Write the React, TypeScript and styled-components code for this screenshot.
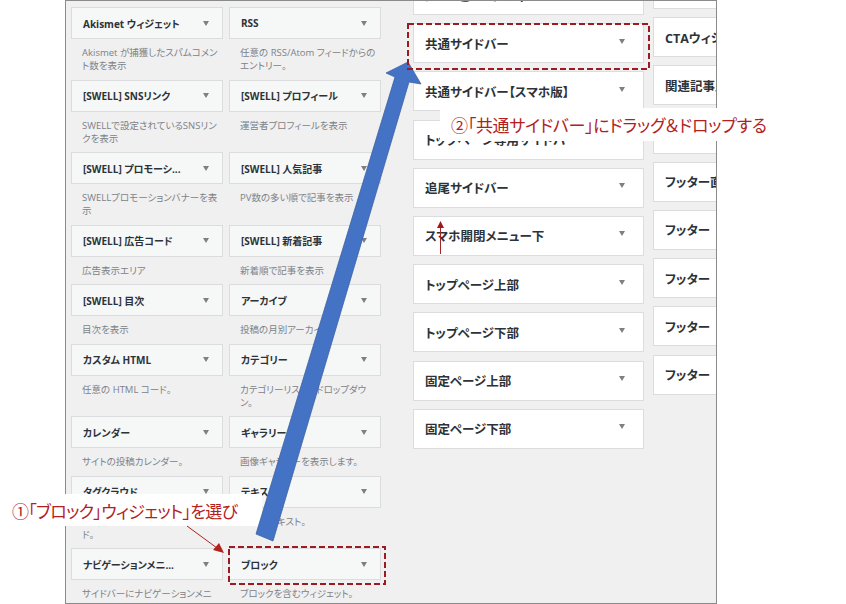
import styled, { createGlobalStyle } from 'styled-components';

const GlobalStyle = createGlobalStyle`
	html, body {
		margin: 0;
		padding: 0;
		background: #fff;
	}
	body {
		font-family: 'Open Sans', 'Noto Sans CJK JP', sans-serif;
		font-feature-settings: 'palt';
	}
`;

const Page = styled.div`
	position: relative;
	width: 846px;
	height: 604px;
	overflow: hidden;
	background: #fff;
`;

const Frame = styled.div`
	box-sizing: border-box;
	display: flex;
	align-items: flex-start;
	margin-left: 65px;
	width: 652px;
	height: 604px;
	padding-left: 5px;
	border: 1px solid #8b8b8b;
	background: #f0f0f1;
	overflow: hidden;
`;

const WidgetGrid = styled.div`
	display: grid;
	grid-template-columns: 152px 152px;
	column-gap: 6px;
	flex: none;
	margin-top: 6px;
	margin-right: 32px;
`;

const WidgetItem = styled.div`
	min-width: 0;
`;

const WidgetCard = styled.div`
	box-sizing: border-box;
	display: flex;
	align-items: center;
	justify-content: space-between;
	height: 32px;
	padding: 0 13px 0 11px;
	background: #f6f7f7;
	border: 1px solid #dcdcde;
	font-size: 10px;
	font-weight: 700;
	color: #2c3338;
	white-space: nowrap;
`;

const WidgetDesc = styled.div`
	padding: 7px 0 7.5px 11px;
	font-size: 9.5px;
	line-height: 13px;
	color: #7d8287;
	white-space: pre;
`;

const SidebarColumn = styled.div<{ $top: number }>`
	display: flex;
	flex: none;
	flex-direction: column;
	gap: 8.2px;
	width: 231px;
	margin-top: ${(p) => p.$top}px;
	margin-right: 9px;
`;

const SidebarCard = styled.div`
	box-sizing: border-box;
	display: flex;
	align-items: center;
	justify-content: space-between;
	height: 40px;
	padding: 0 18px 0 11px;
	background: #fff;
	border: 1px solid #dcdcde;
	font-size: 12.5px;
	font-weight: 700;
	color: #2c3338;
	white-space: nowrap;
`;

const Caret = styled.span<{ $lift: number }>`
	flex: none;
	width: 0;
	height: 0;
	margin-top: ${(p) => -p.$lift}px;
	border-left: 3px solid transparent;
	border-right: 3px solid transparent;
	border-top: 5px solid #7c7f83;
`;

const Callout = styled.div<{ $left: number; $top: number; $width: number; $height: number; $size: number }>`
	position: absolute;
	box-sizing: border-box;
	left: ${(p) => p.$left}px;
	top: ${(p) => p.$top}px;
	width: ${(p) => p.$width}px;
	height: ${(p) => p.$height}px;
	display: flex;
	align-items: center;
	background: #fff;
	font-size: ${(p) => p.$size}px;
	color: #b3211e;
	white-space: nowrap;
`;

const CalloutText = styled.span<{ $indent: number; $spacing: number }>`
	margin-left: ${(p) => p.$indent}px;
	letter-spacing: ${(p) => p.$spacing}px;
`;

const ArrowLayer = styled.svg`
	position: absolute;
	left: 0;
	top: 0;
`;

const widgets = [
	['Akismet ウィジェット', 'Akismet が捕獲したスパムコメン\nト数を表示'],
	['RSS', '任意の RSS/Atom フィードからの\nエントリー。'],
	['[SWELL] SNSリンク', 'SWELLで設定されているSNSリン\nクを表示'],
	['[SWELL] プロフィール', '運営者プロフィールを表示'],
	['[SWELL] プロモーシ...', 'SWELLプロモーションバナーを表\n示'],
	['[SWELL] 人気記事', 'PV数の多い順で記事を表示'],
	['[SWELL] 広告コード', '広告表示エリア'],
	['[SWELL] 新着記事', '新着順で記事を表示'],
	['[SWELL] 目次', '目次を表示'],
	['アーカイブ', '投稿の月別アーカイブ。'],
	['カスタム HTML', '任意の HTML コード。'],
	['カテゴリー', 'カテゴリーリストやドロップダウ\nン。'],
	['カレンダー', 'サイトの投稿カレンダー。'],
	['ギャラリー', '画像ギャラリーを表示します。'],
	['タグクラウド', 'よく使われているタグのクラウ\nド。'],
	['テキスト', '任意のテキスト。'],
	['ナビゲーションメニ...', 'サイドバーにナビゲーションメニ\nュー'],
	['ブロック', 'ブロックを含むウィジェット。'],
];

const middleSidebars = [
	'メインビジュアル下',
	'共通サイドバー',
	'共通サイドバー【スマホ版】',
	'トップページ専用サイドバー',
	'追尾サイドバー',
	'スマホ開閉メニュー下',
	'トップページ上部',
	'トップページ下部',
	'固定ページ上部',
	'固定ページ下部',
];

const rightSidebars = [
	'記事下エリア',
	'CTAウィジェット',
	'関連記事上',
	'関連記事下',
	'フッター直前',
	'フッター　1',
	'フッター　2',
	'フッター　3',
	'フッター　4',
];

export default function App() {
	return (
		<Page>
			<GlobalStyle />
			<Frame>
				<WidgetGrid>
					{widgets.map(([title, desc]) => (
						<WidgetItem key={title}>
							<WidgetCard>
								{title}
								<Caret $lift={0} />
							</WidgetCard>
							<WidgetDesc>{desc}</WidgetDesc>
						</WidgetItem>
					))}
				</WidgetGrid>

				<SidebarColumn $top={-26}>
					{middleSidebars.map((name) => (
						<SidebarCard key={name}>
							{name}
							<Caret $lift={4} />
						</SidebarCard>
					))}
				</SidebarColumn>

				<SidebarColumn $top={-32}>
					{rightSidebars.map((name) => (
						<SidebarCard key={name}>{name}</SidebarCard>
					))}
				</SidebarColumn>
			</Frame>

			{/* callouts */}
			<Callout $left={4} $top={494} $width={258} $height={32} $size={17}>
				<CalloutText $indent={8} $spacing={-0.7}>①「ブロック」ウィジェット」を選び</CalloutText>
			</Callout>
			<Callout $left={440} $top={108} $width={332} $height={33} $size={17}>
				<CalloutText $indent={11} $spacing={-0.3}>②「共通サイドバー」にドラッグ＆ドロップする</CalloutText>
			</Callout>

			<ArrowLayer width='846' height='604' viewBox='0 0 846 604'>
				<polygon
					points='408,62 386,73 395,77 256,534 273,541 409,82 421,84'
					fill='#4472c4'
					stroke='#3a5f9f'
					strokeWidth='0.75'
				/>
				<line x1='187' y1='526' x2='217' y2='548' stroke='#b3211e' strokeWidth='1' />
				<polygon points='224,553 213,550 219,543' fill='#b3211e' />
				<line x1='440.5' y1='254' x2='440.5' y2='226' stroke='#a3262a' strokeWidth='1' />
				<polygon points='440.5,221 437,228 444,228' fill='#a3141c' />
				<rect x='408' y='24' width='241' height='45' fill='none' stroke='#9c1a22' strokeWidth='2' strokeDasharray='6 3' />
				<rect x='229' y='547' width='156' height='37' fill='none' stroke='#9c1a22' strokeWidth='2' strokeDasharray='6 3' />
			</ArrowLayer>
		</Page>
	);
}
